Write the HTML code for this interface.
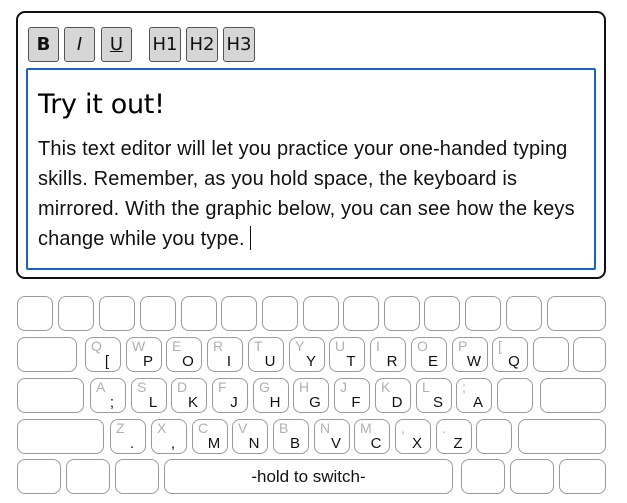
<!DOCTYPE html>
<html><head><meta charset="utf-8"><style>
body{margin:0;width:627px;height:503px;background:#fff;position:relative;overflow:hidden;font-family:"Liberation Sans",Arial,sans-serif}
.ed{position:absolute;left:16px;top:11px;width:586px;height:264px;border:2px solid #111;border-radius:9px}
.b{position:absolute;top:27px;width:29px;height:33px;background:#d6d6d6;border:1px solid #555;border-radius:3px;font-size:18px;line-height:33px;text-align:center;color:#111;font-family:"DejaVu Sans","Liberation Sans",sans-serif}
.box{position:absolute;left:26px;top:68px;width:566px;height:198px;border:2px solid #1b63c0;border-radius:2px}
h1{position:absolute;left:38px;top:88px;margin:0;font-weight:normal;font-size:27px;line-height:34px;font-family:"DejaVu Sans","Liberation Sans",sans-serif;letter-spacing:-0.3px}
p{position:absolute;left:38px;top:134px;margin:0;font-size:20px;line-height:30px;white-space:nowrap;color:#111;letter-spacing:0.15px}
.cur{display:inline-block;width:1px;height:24px;background:#111;vertical-align:-5px;margin-left:5px}
.k{position:absolute;height:33px;border:1px solid #9a9a9a;border-radius:8px;box-sizing:content-box}
.k .u{position:absolute;left:5px;top:1px;font-size:14px;color:#b0b0b0;line-height:15px}
.k .l{position:absolute;left:8px;right:0;bottom:1px;text-align:center;font-size:15px;color:#111;line-height:16px}
.sp{font-size:17px;line-height:33px;text-align:center;color:#111}
</style></head><body>
<div class="ed"></div>
<div class="b" style="left:28px;font-weight:bold">B</div>
<div class="b" style="left:64px;font-style:italic">I</div>
<div class="b" style="left:101px;text-decoration:underline">U</div>
<div class="b" style="left:149px;width:30px">H1</div>
<div class="b" style="left:186px;width:30px">H2</div>
<div class="b" style="left:223px;width:30px">H3</div>
<div class="box"></div>
<h1>Try it out!</h1>
<p>This text editor will let you practice your one-handed typing<br>skills. Remember, as you hold space, the keyboard is<br>mirrored. With the graphic below, you can see how the keys<br>change while you type.<span class="cur"></span></p>

<!-- row1 -->
<div class="k" style="left:17px;top:296px;width:34px"></div>
<div class="k" style="left:58px;top:296px;width:34px"></div>
<div class="k" style="left:99px;top:296px;width:34px"></div>
<div class="k" style="left:140px;top:296px;width:34px"></div>
<div class="k" style="left:181px;top:296px;width:34px"></div>
<div class="k" style="left:221px;top:296px;width:34px"></div>
<div class="k" style="left:262px;top:296px;width:34px"></div>
<div class="k" style="left:303px;top:296px;width:34px"></div>
<div class="k" style="left:343px;top:296px;width:34px"></div>
<div class="k" style="left:384px;top:296px;width:34px"></div>
<div class="k" style="left:424px;top:296px;width:34px"></div>
<div class="k" style="left:465px;top:296px;width:34px"></div>
<div class="k" style="left:506px;top:296px;width:34px"></div>
<div class="k" style="left:547px;top:296px;width:57px"></div>
<!-- row2 -->
<div class="k" style="left:17px;top:337px;width:58px"></div>
<div class="k" style="left:85px;top:337px;width:34px"><span class="u">Q</span><span class="l">[</span></div>
<div class="k" style="left:126px;top:337px;width:34px"><span class="u">W</span><span class="l">P</span></div>
<div class="k" style="left:166px;top:337px;width:34px"><span class="u">E</span><span class="l">O</span></div>
<div class="k" style="left:207px;top:337px;width:34px"><span class="u">R</span><span class="l">I</span></div>
<div class="k" style="left:248px;top:337px;width:34px"><span class="u">T</span><span class="l">U</span></div>
<div class="k" style="left:289px;top:337px;width:34px"><span class="u">Y</span><span class="l">Y</span></div>
<div class="k" style="left:329px;top:337px;width:34px"><span class="u">U</span><span class="l">T</span></div>
<div class="k" style="left:370px;top:337px;width:34px"><span class="u">I</span><span class="l">R</span></div>
<div class="k" style="left:411px;top:337px;width:34px"><span class="u">O</span><span class="l">E</span></div>
<div class="k" style="left:452px;top:337px;width:34px"><span class="u">P</span><span class="l">W</span></div>
<div class="k" style="left:492px;top:337px;width:34px"><span class="u">[</span><span class="l">Q</span></div>
<div class="k" style="left:533px;top:337px;width:34px"></div>
<div class="k" style="left:573px;top:337px;width:31px"></div>
<!-- row3 -->
<div class="k" style="left:17px;top:378px;width:65px"></div>
<div class="k" style="left:90px;top:378px;width:34px"><span class="u">A</span><span class="l">;</span></div>
<div class="k" style="left:131px;top:378px;width:34px"><span class="u">S</span><span class="l">L</span></div>
<div class="k" style="left:171px;top:378px;width:34px"><span class="u">D</span><span class="l">K</span></div>
<div class="k" style="left:212px;top:378px;width:34px"><span class="u">F</span><span class="l">J</span></div>
<div class="k" style="left:253px;top:378px;width:34px"><span class="u">G</span><span class="l">H</span></div>
<div class="k" style="left:293px;top:378px;width:34px"><span class="u">H</span><span class="l">G</span></div>
<div class="k" style="left:334px;top:378px;width:34px"><span class="u">J</span><span class="l">F</span></div>
<div class="k" style="left:375px;top:378px;width:34px"><span class="u">K</span><span class="l">D</span></div>
<div class="k" style="left:416px;top:378px;width:34px"><span class="u">L</span><span class="l">S</span></div>
<div class="k" style="left:456px;top:378px;width:34px"><span class="u">;</span><span class="l">A</span></div>
<div class="k" style="left:497px;top:378px;width:34px"></div>
<div class="k" style="left:540px;top:378px;width:64px"></div>
<!-- row4 -->
<div class="k" style="left:17px;top:419px;width:85px"></div>
<div class="k" style="left:110px;top:419px;width:34px"><span class="u">Z</span><span class="l">.</span></div>
<div class="k" style="left:151px;top:419px;width:34px"><span class="u">X</span><span class="l">,</span></div>
<div class="k" style="left:192px;top:419px;width:34px"><span class="u">C</span><span class="l">M</span></div>
<div class="k" style="left:232px;top:419px;width:34px"><span class="u">V</span><span class="l">N</span></div>
<div class="k" style="left:273px;top:419px;width:34px"><span class="u">B</span><span class="l">B</span></div>
<div class="k" style="left:314px;top:419px;width:34px"><span class="u">N</span><span class="l">V</span></div>
<div class="k" style="left:354px;top:419px;width:34px"><span class="u">M</span><span class="l">C</span></div>
<div class="k" style="left:395px;top:419px;width:34px"><span class="u">,</span><span class="l">X</span></div>
<div class="k" style="left:436px;top:419px;width:34px"><span class="u">.</span><span class="l">Z</span></div>
<div class="k" style="left:476px;top:419px;width:34px"></div>
<div class="k" style="left:518px;top:419px;width:86px"></div>
<!-- row5 -->
<div class="k" style="left:17px;top:459px;width:42px"></div>
<div class="k" style="left:66px;top:459px;width:42px"></div>
<div class="k" style="left:115px;top:459px;width:42px"></div>
<div class="k sp" style="left:164px;top:459px;width:287px">-hold to switch-</div>
<div class="k" style="left:461px;top:459px;width:42px"></div>
<div class="k" style="left:510px;top:459px;width:42px"></div>
<div class="k" style="left:559px;top:459px;width:45px"></div>
</body></html>
